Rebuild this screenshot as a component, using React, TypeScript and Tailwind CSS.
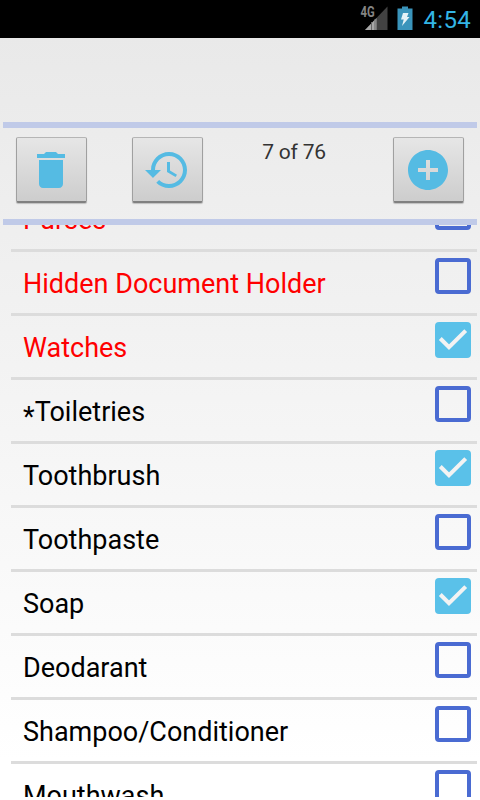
import { useState } from "react";
import type { ReactNode } from "react";

interface PackingItem {
  name: string;
  packed: boolean;
  urgent?: boolean;
}

const initialItems: PackingItem[] = [
  { name: "Purses", packed: false, urgent: true },
  { name: "Hidden Document Holder", packed: false, urgent: true },
  { name: "Watches", packed: true, urgent: true },
  { name: "*Toiletries", packed: false },
  { name: "Toothbrush", packed: true },
  { name: "Toothpaste", packed: false },
  { name: "Soap", packed: true },
  { name: "Deodarant", packed: false },
  { name: "Shampoo/Conditioner", packed: false },
  { name: "Mouthwash", packed: false },
];

function StatusBar() {
  return (
    <header className="flex h-[38px] shrink-0 items-start justify-end bg-black">
      <svg width="30" height="38" viewBox="0 0 30 38" className="mr-[9px]">
        <path d="M29.5 6.5V30H7z" fill="#424242" />
        <path d="M18.5 18V30H7z" fill="#a8a8a8" />
        <path d="M13.5 22v8M17 19v11" stroke="#666" strokeWidth="1" />
        <g transform="translate(2.5 17.3) scale(0.78 1)">
          <text x="0" y="0" fontSize="14.5" fontWeight="700" fill="#858585" stroke="#000" strokeWidth="2.5" paintOrder="stroke">
            4G
          </text>
        </g>
      </svg>
      <svg width="18" height="38" viewBox="0 0 18 38" className="mr-[9px]">
        <path d="M5 6.5h6v2h4.5V30H.5V8.5H5z" fill="#3a94bb" />
        <path d="M6 13h5.5L10 17h2.5L5 26l1.7-6.5H4z" fill="#e5f2f7" />
      </svg>
      <span className="mr-[9px] pt-[5px] text-[24px] leading-[30px] tracking-[0.3px] text-[#33b5e5]">4:54</span>
    </header>
  );
}

function ToolButton({ label, children }: { label: string; children: ReactNode }) {
  return (
    <button
      aria-label={label}
      className="flex h-[66px] w-[71px] items-center justify-center rounded-[2px] border border-b-2 border-t-[#b5b5b5] border-r-[#a0a0a0] border-b-[#808080] border-l-[#a0a0a0] bg-linear-to-b from-[#e6e6e6] to-[#cdcdcd] shadow-[0_1px_1px_rgba(0,0,0,0.2)]"
    >
      <svg width="48" height="48" viewBox="0 0 24 24" fill="#55bbe3" className="mr-px">
        {children}
      </svg>
    </button>
  );
}

function CheckBox({ checked, onClick }: { checked: boolean; onClick: () => void }) {
  return (
    <button
      role="checkbox"
      aria-checked={checked}
      onClick={onClick}
      className={
        checked
          ? "mt-[6px] mr-[6px] size-[36px] rounded-[4px] bg-[#5ac1e9]"
          : "mt-[6px] mr-[6px] size-[36px] rounded-[4px] border-4 border-[#4a6bd2]"
      }
    >
      {checked && (
        <svg width="36" height="36" viewBox="0 0 36 36" fill="none" stroke="#f3f3f3" strokeWidth="4">
          <path d="M5.3 16.5l8.7 8.7L30.7 8.7" />
        </svg>
      )}
    </button>
  );
}

function ItemName({ name }: { name: string }) {
  if (!name.startsWith("*")) return name;
  // category headings carry a lowered asterisk
  return (
    <>
      <span className="relative top-[5px]">*</span>
      {name.slice(1)}
    </>
  );
}

export default function App() {
  const [items, setItems] = useState(initialItems);

  const toggle = (index: number) => {
    setItems(items.map((item, i) => (i === index ? { ...item, packed: !item.packed } : item)));
  };

  return (
    <div className="flex h-[800px] w-[480px] flex-col overflow-hidden bg-linear-to-b from-[#e8e8e8] to-white to-95% font-['Roboto','Liberation_Sans',sans-serif]">
      <StatusBar />

      {/* Toolbar */}
      <div className="mt-[84px] mr-[3px] ml-[3px] flex h-[103px] shrink-0 items-start border-y-6 border-[#c0cae8] pt-[9px] pl-[13px]">
        <ToolButton label="Delete">
          <path d="M6 19c0 1.1.9 2 2 2h8c1.1 0 2-.9 2-2V7H6v12zM19 4h-3.5l-1-1h-5l-1 1H5v2h14V4z" />
        </ToolButton>
        <div className="ml-[45px]">
          <ToolButton label="History">
            <path d="M13 3c-4.97 0-9 4.03-9 9H1l3.89 3.89.07.14L9 12H6c0-3.87 3.13-7 7-7s7 3.13 7 7-3.13 7-7 7c-1.93 0-3.68-.79-4.94-2.06l-1.42 1.42C8.27 19.99 10.51 21 13 21c4.97 0 9-4.03 9-9s-4.03-9-9-9zm-1 5v5l4.28 2.54.72-1.21-3.5-2.08V8H12z" />
          </ToolButton>
        </div>
        <span className="flex-1 pr-[8px] text-center text-[21px] leading-[30px] tracking-[-0.2px] text-[#333]">7 of 76</span>
        <div className="mr-[13px]">
          <ToolButton label="Add">
            <path d="M12 2C6.48 2 2 6.48 2 12s4.48 10 10 10 10-4.48 10-10S17.52 2 12 2zm5 11h-4v4h-2v-4H7v-2h4V7h2v4h4v2z" />
          </ToolButton>
        </div>
      </div>

      {/* Packing list */}
      <main className="mb-[3px] min-h-0 flex-1 overflow-hidden">
        <ul className="-mt-[37px] mr-[3px] ml-[11px]">
          {items.map((item, index) => (
            <li key={item.name} className="flex h-[64px] items-start justify-between border-b-3 border-[#dcdcdc]">
              <span
                className={
                  item.urgent
                    ? "pt-[12px] pl-[12px] text-[27px] leading-[40px] text-[#ff0000]"
                    : "pt-[12px] pl-[12px] text-[27px] leading-[40px] text-black"
                }
              >
                <ItemName name={item.name} />
              </span>
              <CheckBox checked={item.packed} onClick={() => toggle(index)} />
            </li>
          ))}
        </ul>
      </main>
    </div>
  );
}
